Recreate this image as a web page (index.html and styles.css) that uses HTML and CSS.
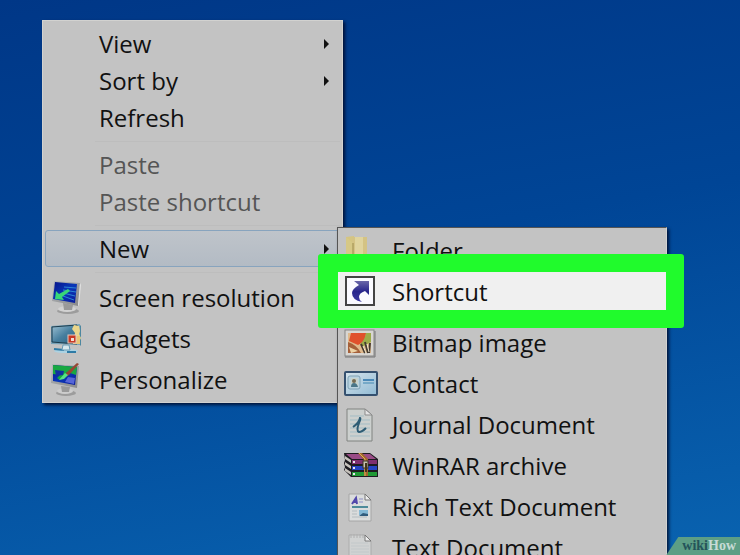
FILE: index.html
```html
<!DOCTYPE html>
<html lang="en">

<head>
  <meta charset="UTF-8" />
  <meta name="viewport" content="width=device-width, initial-scale=1.0" />
  <title>Create a shortcut</title>
  <link rel="stylesheet" href="styles.css">
</head>

<body>
  <main class="desktop">
    <ul class="menu desktop-menu">
      <li><button class="item" type="button"><span class="icon"></span>View<span class="arrow"></span></button></li>
      <li><button class="item" type="button"><span class="icon"></span>Sort by<span class="arrow"></span></button></li>
      <li><button class="item" type="button"><span class="icon"></span>Refresh</button></li>
      <li class="separator"></li>
      <li><button class="item" type="button" disabled><span class="icon"></span>Paste</button></li>
      <li><button class="item" type="button" disabled><span class="icon"></span>Paste shortcut</button></li>
      <li class="separator"></li>
      <li><button class="item selected" type="button"><span class="icon"></span>New<span class="arrow"></span></button></li>
      <li class="separator"></li>
      <li>
        <button class="item tall" type="button">
          <span class="icon">
            <svg width="32" height="36" viewBox="0 0 32 36">
              <defs>
                <linearGradient id="screen" x1="0" y1="0" x2="1" y2="1">
                  <stop offset="0" stop-color="#06148a" />
                  <stop offset="0.5" stop-color="#0a38b8" />
                  <stop offset="1" stop-color="#0b1a98" />
                </linearGradient>
                <linearGradient id="metal" x1="0" y1="0" x2="1" y2="1">
                  <stop offset="0" stop-color="#b4b8bc" />
                  <stop offset="1" stop-color="#888" />
                </linearGradient>
              </defs>
              <ellipse cx="17" cy="31" rx="11" ry="3" fill="#9c9c9c" />
              <ellipse cx="16" cy="29" rx="9" ry="3" fill="#d2d2d2" />
              <path d="M12 23l10 2-1 5h-8z" fill="#999" />
              <path d="M3 1l26 2-2 23L1 21z" fill="url(#metal)" />
              <path d="M27 26l2-23 1 2-2 20z" fill="#e2e2e2" />
              <path d="M4 2l22 2-2 19L2 19z" fill="url(#screen)" />
              <path d="M13 7l12 1M12 10l13 2M12 13l12 3M12 16l11 4" stroke="#2d86d8" stroke-width="1" />
              <path d="M17 9l2 2-8 6 2 3-9-1 1-8 3 3z" fill="#38d878" />
            </svg>
          </span>Screen resolution
        </button>
      </li>
      <li>
        <button class="item tall" type="button">
          <span class="icon">
            <svg width="32" height="32" viewBox="0 0 32 32">
              <defs>
                <linearGradient id="glass" x1="0" y1="0" x2="1" y2="1">
                  <stop offset="0" stop-color="#9cc0d2" />
                  <stop offset="0.5" stop-color="#477f9f" />
                  <stop offset="1" stop-color="#286080" />
                </linearGradient>
              </defs>
              <ellipse cx="15" cy="28" rx="12" ry="2" fill="#acd2e2" />
              <path d="M3 26l10 1M16 29h9" fill="none" stroke="#2e7ba6" stroke-width="2" />
              <path d="M12 22h6l1 5h-8z" fill="#d8e8ee" stroke="#669ab6" />
              <path d="M0 3l29-2v21L0 21z" fill="#78a2b8" />
              <path d="M1 4l25-2v19L1 19z" fill="url(#glass)" stroke="#1b3b4c" />
              <path d="M29 2l1 1v19l-1 1z" fill="#4d87a0" />
              <path d="M23 2l5 1 1 5-1 3 2 4-2 4-5-3 1-6-3-4z" fill="#ead68b" />
              <path d="M22 13h7v8h-7z" fill="#e8c576" />
              <rect x="17" y="12" width="8" height="8" fill="#c83a25" stroke="#e5c9c0" />
              <path d="M20 15h3v3h-3z" fill="#f0ded4" />
            </svg>
          </span>Gadgets
        </button>
      </li>
      <li>
        <button class="item tall" type="button">
          <span class="icon">
            <svg width="32" height="36" viewBox="0 0 32 36">
              <ellipse cx="15" cy="31" rx="10" ry="3" fill="#9c9c9c" />
              <ellipse cx="14" cy="29" rx="8" ry="3" fill="#cdcdcd" />
              <path d="M10 24l9 1-1 5h-7z" fill="#999" />
              <path d="M1 2l27 2-2 22-26-5z" fill="url(#metal)" />
              <path d="M2 3l24 2-2 18-22-4z" fill="url(#screen)" />
              <path d="M2 3l24 2-1 8-9-3-2 5-5 3-3-2 3-3-7-1z" fill="#18a842" />
              <path d="M4 8l9 1-1 4-7 1z" fill="#1230a0" />
              <path d="M17 15l7 1-1 6-9-2z" fill="#5766d8" />
              <path d="M26 1l2 1-10 11-5 3 2-5z" fill="#954734" />
              <path d="M14 11l3 2-4 4-5 1z" fill="#57e285" />
            </svg>
          </span>Personalize
        </button>
      </li>
    </ul>

    <ul class="menu new-menu">
      <li>
        <button class="item tall" type="button">
          <span class="icon">
            <svg width="34" height="34" viewBox="0 0 34 34">
              <path d="M2 3l8-1v31l-8-3z" fill="#d5c581" />
              <path d="M8 3h15v27H8z" fill="#d4c384" />
              <path d="M11 3h8v28h-8z" fill="#e0d49e" />
              <path d="M2 3l7 6v24l-7-3z" fill="#d6c886" />
              <path d="M9 9v23" stroke="#9c8c4d" />
            </svg>
          </span>Folder
        </button>
      </li>
      <li class="highlight">
        <button class="item tall" type="button">
          <span class="icon">
            <svg width="34" height="34" viewBox="0 0 34 34">
              <defs>
                <linearGradient id="jump" x1="0" y1="0" x2="0" y2="1">
                  <stop offset="0" stop-color="#6966a8" />
                  <stop offset="0.5" stop-color="#27258c" />
                  <stop offset="1" stop-color="#3a38a0" />
                </linearGradient>
              </defs>
              <rect x="2" y="2" width="28" height="28" fill="#fafaff" stroke="#444" stroke-width="2" />
              <path d="M10 6h15v14l-4-4q-6 2-6 6 0 3 3 5Q8 25 8 18q0-4 7-8z" fill="url(#jump)" />
            </svg>
          </span>Shortcut
        </button>
      </li>
      <li class="separator"></li>
      <li>
        <button class="item tall" type="button">
          <span class="icon">
            <svg width="34" height="34" viewBox="0 0 34 34">
              <rect x="1" y="4" width="29" height="26" fill="#d8d6d2" stroke="#858585" />
              <rect x="4" y="7" width="23" height="20" fill="#dfb98c" />
              <path d="M7 7h15l-1 8-7 4-9-4z" fill="#e0502c" />
              <path d="M22 7h5v9l-9 5-2-3q5-4 6-11z" fill="#9cac4a" />
              <path d="M4 16q9 3 13 11H4z" fill="#a5603a" />
              <path d="M5 21l9 4-7 2z" fill="#edd2a4" />
              <path d="M17 18l4 9M21 16l3 11M26 17l-1 10" stroke="#453b31" stroke-width="2" />
              <path d="M19 20l3 7M23 18l2 8" stroke="#f2e8cb" />
              <path d="M1 31h30V5" fill="none" stroke="#777" />
            </svg>
          </span>Bitmap image
        </button>
      </li>
      <li>
        <button class="item tall" type="button">
          <span class="icon">
            <svg width="34" height="34" viewBox="0 0 34 34">
              <defs>
                <linearGradient id="card" x1="0" y1="0" x2="1" y2="1">
                  <stop offset="0" stop-color="#d6e4ec" />
                  <stop offset="1" stop-color="#90bad4" />
                </linearGradient>
              </defs>
              <rect x="1" y="5" width="32" height="23" rx="1" fill="url(#card)" stroke="#34506f" stroke-width="2" />
              <rect x="4" y="9" width="12" height="13" rx="2" fill="#b8d2df" stroke="#7fa2b5" />
              <rect x="7" y="11" width="7" height="9" fill="#c8d3cc" />
              <circle cx="10" cy="14" r="2" fill="#766c53" />
              <path d="M7 20q0-4 3-4t4 4z" fill="#4a7688" />
              <path d="M19 13h11" stroke="#4a89b8" stroke-width="2" />
              <path d="M19 16h11" stroke="#76a9c8" stroke-width="2" />
            </svg>
          </span>Contact
        </button>
      </li>
      <li>
        <button class="item tall" type="button">
          <span class="icon">
            <svg width="34" height="34" viewBox="0 0 34 34">
              <path d="M3 1h18l7 6v26H3z" fill="#ccd0ce" stroke="#808380" />
              <path d="M6 12h20M6 16h20M6 20h20M6 24h20M6 28h20M6 8h14" stroke="#a3bdc5" />
              <path d="M21 1v6h7z" fill="#e4e4e4" stroke="#8b8b8b" />
              <path d="M9 19q6-4 7-9 1 0-1 5-3 8 0 9 3 0 7-4" fill="none" stroke="#2d5c74" stroke-width="2" />
            </svg>
          </span>Journal Document
        </button>
      </li>
      <li>
        <button class="item tall" type="button">
          <span class="icon">
            <svg width="34" height="34" viewBox="0 0 34 34">
              <path d="M0 4h26l8 6v18H7l-7-7 1-3-1-4 1-3z" fill="#1d1b20" />
              <path d="M2 5h24l6 5H8z" fill="#9a4b86" />
              <path d="M8 11h25v4H8z" fill="#7e2f70" />
              <path d="M8 17h25v4H8z" fill="#2444c4" />
              <path d="M8 23h25v4H8z" fill="#209a35" />
              <path d="M1 7l6 4v3l-6-4zM1 13l6 4v3l-6-4zM1 19l6 4v3l-6-4z" fill="#c6c2bc" />
              <path d="M10 12v2M10 18v2M10 24v2" stroke="#e6e2f0" stroke-width="2" />
              <path d="M14 4h4l6 6v17h-4V11z" fill="#a0682c" />
              <path d="M15 4l6 6v17" fill="none" stroke="#e0ae58" />
              <rect x="19" y="12" width="5" height="7" fill="#c8c2b0" stroke="#393225" />
              <path d="M22 14v9" stroke="#42351e" stroke-width="2" />
            </svg>
          </span>WinRAR archive
        </button>
      </li>
      <li>
        <button class="item tall" type="button">
          <span class="icon">
            <svg width="34" height="34" viewBox="0 0 34 34">
              <path d="M5 4h16l6 6v21H5z" fill="#dadcdc" stroke="#a6a6a6" />
              <path d="M21 4v6h6z" fill="#eee" stroke="#777" />
              <path d="M8 14l4-6 1 6M9 12h4" fill="none" stroke="#5148ab" stroke-width="2" />
              <path d="M15 9h4M15 12h4" stroke="#8f91c6" />
              <path d="M8 17h16" stroke="#4d8b9a" stroke-width="2" />
              <path d="M8 21h5M8 24h5M8 27h15" stroke="#b4bcc0" />
              <rect x="15" y="20" width="9" height="5" fill="#83b8d5" />
              <path d="M15 26l4-3 5 1v2z" fill="#315c7c" />
            </svg>
          </span>Rich Text Document
        </button>
      </li>
      <li>
        <button class="item tall" type="button">
          <span class="icon">
            <svg width="34" height="34" viewBox="0 0 34 34">
              <path d="M5 4h16l6 6v22H5z" fill="#d0d2d2" stroke="#acacac" />
              <path d="M21 4v6h6z" fill="#eee" stroke="#777" />
              <path d="M7 3v4M10 3v4M13 3v4M16 3v4M19 3v4" stroke="#b0b0b0" />
              <path d="M7 12h17M7 15h18M7 18h18M7 21h18M7 24h18M7 27h18" stroke="#c2c8ca" />
            </svg>
          </span>Text Document
        </button>
      </li>
    </ul>

    <div class="watermark"><span class="wiki">wiki</span>How</div>
  </main>
</body>

</html>
```
FILE: styles.css
```css
* {
  box-sizing: border-box;
}

body {
  margin: 0;
  font-family: "Open Sans", "Noto Sans", sans-serif;
}

.desktop {
  position: relative;
  height: 100vh;
  overflow: hidden;
  background: linear-gradient(170deg, #003787 0%, #004596 45%, #0963b0 100%);
}

.menu {
  position: absolute;
  margin: 0;
  padding: 4px 2px 2px;
  list-style: none;
  background: #c3c3c3;
  border: 1px solid #d2d2d0;
  box-shadow: 2px 2px 3px rgba(0, 5, 30, 0.8);
}

.desktop-menu {
  left: 42px;
  top: 20px;
  width: 301px;
}

.new-menu {
  left: 337px;
  top: 227px;
  width: 330px;
  padding: 2px 0;
  border-color: #555 #d2d2d0 #555 #555;
}

.item {
  display: flex;
  align-items: center;
  width: 100%;
  height: 37px;
  padding: 0 10px 0 5px;
  border: 1px solid transparent;
  border-radius: 3px;
  background: transparent;
  color: #111;
  font-family: inherit;
  font-size: 24px;
  line-height: 36px;
  text-align: left;
  white-space: nowrap;
}

.item:disabled {
  color: #555;
}

.tall {
  height: 41px;
}

.selected {
  background: linear-gradient(#bfc4ca, #b3bbc4);
  border-color: #88a4be;
}

.icon {
  display: flex;
  flex: none;
  width: 48px;
}

.separator {
  height: 10px;
  margin-left: 50px;
  background: linear-gradient(#bdbdbd, #bdbdbd) center / 100% 1px no-repeat;
}

.arrow {
  margin-left: auto;
  border: 5px solid transparent;
  border-left-color: #111;
  border-right: 0;
}

/* frame drawn round the item to click */
.highlight {
  position: relative;
  background: #f0f0f0;
}

.highlight::after {
  content: "";
  position: absolute;
  inset: -17px -18px -16px -20px;
  border: 18px solid #20fb2c;
  border-left-width: 20px;
  border-radius: 3px;
}

.watermark {
  position: absolute;
  right: 0;
  bottom: 0;
  padding: 0 4px 0 16px;
  background: #5d9e85;
  clip-path: polygon(12px 0, 100% 0, 100% 100%, 0 100%);
  color: #c6dbd6;
  font-family: "Liberation Serif", serif;
  font-size: 14px;
  font-weight: bold;
  line-height: 18px;
}

.wiki {
  color: #24545a;
}
```
